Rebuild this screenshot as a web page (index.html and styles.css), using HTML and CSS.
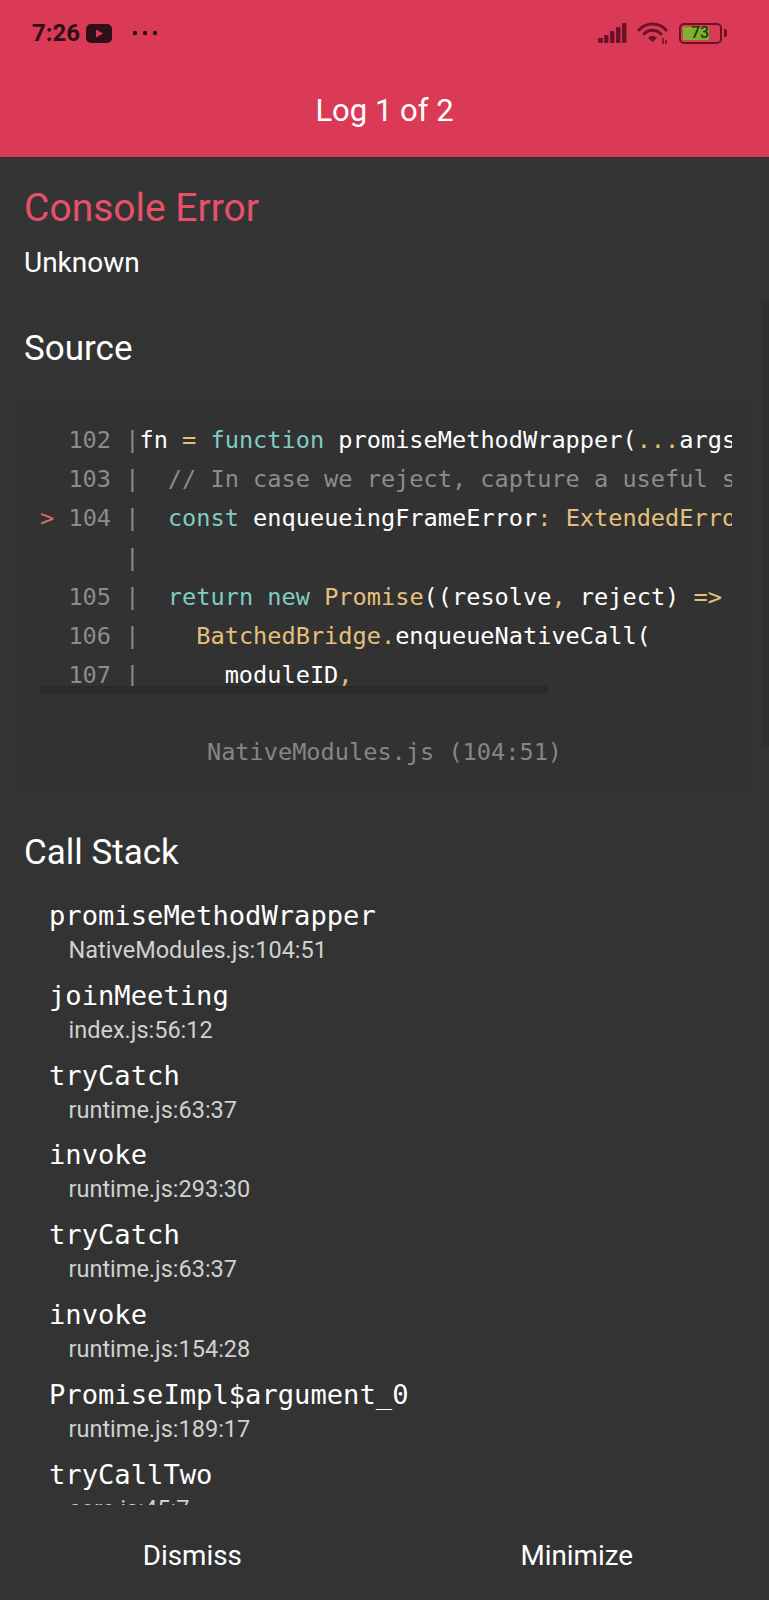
FILE: index.html
```html
<!DOCTYPE html>
<html lang="en">
<head>
<meta charset="utf-8">
<title>Log 1 of 2</title>
<link rel="stylesheet" href="styles.css">
</head>
<body>
<div class="app">
  <header class="header">
    <div class="status">
      <div class="status-left">
        <span class="time">7:26</span>
        <svg class="yt" width="26" height="19" viewBox="0 0 26 19"><rect width="26" height="19" rx="5" fill="#2d1017"/><path d="M10 5.500v8l7-4z" fill="#db3a57"/></svg>
        <svg class="dots" width="26" height="6" viewBox="0 0 26 6"><circle cx="3" cy="3" r="2.200" fill="#2d1017"/><circle cx="13" cy="3" r="2.200" fill="#2d1017"/><circle cx="23" cy="3" r="2.200" fill="#2d1017"/></svg>
      </div>
      <div class="status-right">
        <svg width="30" height="22" viewBox="0 0 30 22"><g fill="#6b1226"><rect x="1" y="16" width="5" height="5" rx="1"/><rect x="7" y="13" width="4.500" height="8" rx="1"/><rect x="13" y="9" width="4.500" height="12" rx="1"/><rect x="19" y="5" width="4.500" height="16" rx="1"/><rect x="25" y="1" width="4.500" height="20" rx="1"/></g></svg>
        <svg class="wifi" width="32" height="24" viewBox="0 0 32 24"><g fill="none" stroke="#6b1226" stroke-width="3" stroke-linecap="round"><path d="M2 9c7-8 20-8 27 0"/><path d="M7 13c5-5 12-5 17 0"/></g><path d="M11 17c3-3 6-3 9 0l-4.500 4z" fill="#6b1226"/><path d="M26 17v6M29 19v4" stroke="#6b1226" stroke-width="1.500" fill="none"/></svg>
        <div class="battery"><div class="battery-body"><span class="battery-fill"></span><span class="battery-text">73</span></div><span class="battery-tip"></span></div>
      </div>
    </div>
    <h1 class="title">Log 1 of 2</h1>
  </header>
  <main class="body">
    <section class="summary">
      <h2 class="error-type">Console Error</h2>
      <p class="error-msg">Unknown</p>
    </section>
    <h3 class="heading heading-source">Source</h3>
    <div class="code-box">
<pre class="code"><span class="num">  102 |</span>fn <span class="y">=</span> <span class="t">function</span> promiseMethodWrapper(<span class="y">...</span>args) {
<span class="num">  103 |</span><span class="num">  // In case we reject, capture a useful stack trace</span>
<span class="r">&gt;</span><span class="num"> 104 |</span>  <span class="t">const</span> enqueueingFrameError<span class="y">: ExtendedError</span> = new Error();
<span class="num">      |</span>
<span class="num">  105 |</span>  <span class="t">return</span> <span class="t">new</span> <span class="y">Promise</span>((resolve<span class="y">,</span> reject) <span class="y">=&gt;</span>
<span class="num">  106 |</span>    <span class="y">BatchedBridge.</span>enqueueNativeCall(
<span class="num">  107 |</span>      moduleID<span class="y">,</span></pre>
      <div class="hbar"></div>
    </div>
    <div class="file-bar">NativeModules.js (104:51)</div>
    <h3 class="heading heading-stack">Call Stack</h3>
    <ul class="frames">
      <li class="frame"><div class="fn">promiseMethodWrapper</div><div class="loc">NativeModules.js:104:51</div></li>
      <li class="frame"><div class="fn">joinMeeting</div><div class="loc">index.js:56:12</div></li>
      <li class="frame"><div class="fn">tryCatch</div><div class="loc">runtime.js:63:37</div></li>
      <li class="frame"><div class="fn">invoke</div><div class="loc">runtime.js:293:30</div></li>
      <li class="frame"><div class="fn">tryCatch</div><div class="loc">runtime.js:63:37</div></li>
      <li class="frame"><div class="fn">invoke</div><div class="loc">runtime.js:154:28</div></li>
      <li class="frame"><div class="fn">PromiseImpl$argument_0</div><div class="loc">runtime.js:189:17</div></li>
      <li class="frame"><div class="fn">tryCallTwo</div><div class="loc">core.js:45:7</div></li>
    </ul>
    <div class="vbar"></div>
  </main>
  <footer class="footer">
    <button class="btn">Dismiss</button>
    <button class="btn">Minimize</button>
  </footer>
</div>
</body>
</html>
```
FILE: styles.css
```css
* { box-sizing: border-box; }
html, body { margin: 0; padding: 0; background: #333; }
.app {
  width: 769px;
  height: 1600px;
  display: flex;
  flex-direction: column;
  overflow: hidden;
  font-family: Roboto, sans-serif;
  color: #fff;
}
.header {
  height: 157px;
  flex: none;
  background: #db3a57;
  display: flex;
  flex-direction: column;
}
.status {
  height: 66px;
  padding: 0 42px 0 32px;
  display: flex;
  align-items: center;
  justify-content: space-between;
}
.status-left { display: flex; align-items: center; }
.time { font-size: 24px; font-weight: 700; color: #2d1017; line-height: 28px; }
.yt { margin-left: 6px; }
.dots { margin-left: 20px; }
.status-right { display: flex; align-items: center; gap: 10px; }
.battery { display: flex; align-items: center; gap: 2px; }
.battery-body {
  width: 43px;
  height: 21px;
  border: 2.5px solid #6b1226;
  border-radius: 5px;
  position: relative;
  padding: 2px;
  display: flex;
}
.battery-fill { width: 73%; background: #7fb02e; }
.battery-text {
  position: absolute;
  left: 10px;
  top: -2px;
  font: 500 16px/20px Roboto, sans-serif;
  color: #14400f;
}
.battery-tip { width: 3px; height: 8px; background: #6b1226; border-radius: 0 2px 2px 0; }
.title {
  margin: 25px 0 0;
  text-align: center;
  font-size: 31px;
  font-weight: 400;
  line-height: 40px;
}
.body {
  position: relative;
  flex: 1 1 0;
  min-height: 0;
  overflow: hidden;
  background: #333;
}
.summary { padding: 27px 24px 0; height: 139px; background: #343434; }
.error-type { margin: 0; font-size: 39px; font-weight: 400; line-height: 48px; color: #e8506a; }
.error-msg { margin: 14px 0 0; font-size: 28px; line-height: 34px; }
.heading { margin: 0; padding-left: 24px; font-size: 35px; font-weight: 400; line-height: 40px; }
.heading-source { margin-top: 33px; }
.code-box {
  position: relative;
  margin: 31px 20px 0;
  height: 313px;
  background: #323232;
  padding: 21px 17px 0 20px;
  overflow: hidden;
}
.code {
  margin: 0;
  font: 400 23.6px/39.2px "DejaVu Sans Mono", monospace;
  overflow: hidden;
  white-space: pre;
  color: #fff;
}
.num { color: #8c8c8c; }
.t { color: #80cbc4; }
.y { color: #e5c07b; }
.r { color: #d46a6a; }
.hbar {
  position: absolute;
  left: 20px;
  top: 286px;
  width: 508px;
  height: 8px;
  background: #2a2a2a;
}
.file-bar {
  margin: 4px 20px 0;
  height: 69px;
  background: #323232;
  color: #868686;
  text-align: center;
  font: 400 23.6px/70px "DejaVu Sans Mono", monospace;
}
.heading-stack { margin-top: 47px; }
.frames { list-style: none; margin: 23px 0 0; padding: 0 0 0 49px; }
.frame { height: 79.8px; }
.fn { font: 400 27.15px/40px "DejaVu Sans Mono", monospace; }
.loc { margin-left: 19.5px; margin-top: -1px; font-size: 23.5px; line-height: 30px; color: #d0d0d0; }
.vbar {
  position: absolute;
  right: 0;
  top: 144px;
  width: 7px;
  height: 445px;
  background: #2d2d2d;
}
.footer {
  height: 95px;
  flex: none;
  background: #333;
  display: flex;
}
.btn {
  flex: 1;
  border: 0;
  background: none;
  color: #fff;
  font: 400 27.8px Roboto, sans-serif;
  padding: 6px 0 0 0;
}
```
